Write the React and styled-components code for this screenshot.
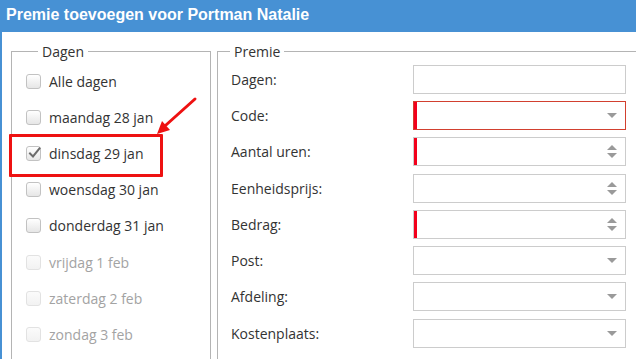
import React from "react";
import styled, { createGlobalStyle, css } from "styled-components";

const Global = createGlobalStyle`
  html, body { margin: 0; padding: 0; background: #fff; }
  * { box-sizing: border-box; }
`;

const Window = styled.div`
  position: relative;
  width: 636px;
  height: 359px;
  overflow: hidden;
  background: #fff;
  border-left: 2px solid #4791d4;
  font-family: "Open Sans", "Noto Sans", sans-serif;
  font-size: 14px;
  color: #333;
`;

const TitleBar = styled.div`
  height: 32px;
  margin-left: -2px;
  background: #4791d4;
  color: #fff;
  font-family: "Liberation Sans", Arial, sans-serif;
  font-weight: bold;
  font-size: 16px;
  line-height: 29px;
  padding-left: 6px;
  white-space: nowrap;
`;

const Body = styled.div`
  display: flex;
  gap: 6px;
  padding: 10px 0 0 9px;
`;

const Group = styled.fieldset`
  flex-shrink: 0;
  width: ${(p) => p.$width}px;
  height: 360px;
  margin: 0;
  padding: ${(p) => p.$pad};
  border: 1px solid #b4b4b4;
  min-width: 0;
`;

const Legend = styled.legend`
  margin-left: 12px;
  padding: 0 4px;
  font-size: 14px;
  line-height: 19px;
  color: #333;
`;

const DayList = styled.div`
  display: flex;
  flex-direction: column;
`;

const DayRow = styled.label`
  position: relative;
  display: flex;
  align-items: center;
  gap: 8px;
  height: 36.2px;
  color: ${(p) => (p.$disabled ? "#a3a3a3" : "#333")};
  ${(p) =>
    p.$highlight &&
    css`
      &::after {
        content: "";
        position: absolute;
        left: -17px;
        top: -1px;
        width: 148px;
        height: 37px;
        border: 3px solid #ee1111;
        border-radius: 1px;
      }
    `}
`;

const Box = styled.span`
  position: relative;
  width: 15px;
  height: 15px;
  flex-shrink: 0;
  border: 1px solid ${(p) => (p.$disabled ? "#e2e2e2" : "#c2c2c2")};
  border-radius: 3px;
  background: ${(p) =>
    p.$disabled
      ? "linear-gradient(#fbfbfb, #f2f2f2)"
      : "linear-gradient(#ffffff, #e6e6e6)"};
  svg {
    position: absolute;
    left: 0px;
    top: -1px;
  }
`;

const FormGrid = styled.div`
  display: flex;
  flex-direction: column;
  padding-left: 13px;
`;

const FormRow = styled.div`
  display: flex;
  align-items: center;
  height: 36.3px;
`;

const Label = styled.span`
  width: 182px;
  color: #333;
`;

const Input = styled.div`
  position: relative;
  width: 213px;
  height: 29px;
  border: 1px solid ${(p) => (p.$error ? "#d2402f" : "#cccccc")};
  background: #fff;
  ${(p) =>
    p.$required &&
    css`
      &::before {
        content: "";
        position: absolute;
        left: 0;
        top: 0;
        bottom: 0;
        width: 3px;
        background: #f3001c;
      }
    `}
`;

const Ctl = styled.div`
  position: absolute;
  right: 8px;
  top: 0;
  bottom: 0;
  display: flex;
  flex-direction: column;
  justify-content: center;
  gap: 3px;
`;

const Overlay = styled.svg`
  position: absolute;
  left: -2px;
  top: 0;
  pointer-events: none;
`;

const Down = () => (
  <svg width="10" height="5" viewBox="0 0 10 5">
    <path d="M0 0 H10 L5 5 Z" fill="#9a9a9a" />
  </svg>
);
const Up = () => (
  <svg width="10" height="5" viewBox="0 0 10 5">
    <path d="M0 5 H10 L5 0 Z" fill="#9a9a9a" />
  </svg>
);

const Check = () => (
  <svg width="15" height="15" viewBox="0 0 15 15">
    <path
      d="M3 7.5 L6 10.5 L12.5 2.5"
      fill="none"
      stroke="#6b6b6b"
      strokeWidth="2"
      strokeLinecap="square"
    />
  </svg>
);

const days = [
  { label: "Alle dagen" },
  { label: "maandag 28 jan" },
  { label: "dinsdag 29 jan", checked: true, highlight: true },
  { label: "woensdag 30 jan" },
  { label: "donderdag 31 jan" },
  { label: "vrijdag 1 feb", disabled: true },
  { label: "zaterdag 2 feb", disabled: true },
  { label: "zondag 3 feb", disabled: true },
];

const fields = [
  { label: "Dagen:", kind: "text" },
  { label: "Code:", kind: "select", required: true, error: true },
  { label: "Aantal uren:", kind: "spin", required: true },
  { label: "Eenheidsprijs:", kind: "spin" },
  { label: "Bedrag:", kind: "spin", required: true },
  { label: "Post:", kind: "select" },
  { label: "Afdeling:", kind: "select" },
  { label: "Kostenplaats:", kind: "select" },
];

export default function App() {
  return (
    <>
      <Global />
      <Window>
        <TitleBar>Premie toevoegen voor Portman Natalie</TitleBar>
        <Body>
          <Group $width={200} $pad="2px 0 0 14px">
            <Legend>Dagen</Legend>
            <DayList>
              {days.map((d) => (
                <DayRow key={d.label} $disabled={d.disabled} $highlight={d.highlight}>
                  <Box $disabled={d.disabled}>{d.checked && <Check />}</Box>
                  {d.label}
                </DayRow>
              ))}
            </DayList>
          </Group>
          <Group $width={440} $pad="0 0 0 0">
            <Legend>Premie</Legend>
            <FormGrid>
              {fields.map((f) => (
                <FormRow key={f.label}>
                  <Label>{f.label}</Label>
                  <Input $required={f.required} $error={f.error}>
                    {f.kind === "select" && (
                      <Ctl>
                        <Down />
                      </Ctl>
                    )}
                    {f.kind === "spin" && (
                      <Ctl>
                        <Up />
                        <Down />
                      </Ctl>
                    )}
                  </Input>
                </FormRow>
              ))}
            </FormGrid>
          </Group>
        </Body>
        <Overlay width="636" height="359" viewBox="0 0 636 359">
          <line x1="195" y1="99" x2="166" y2="125" stroke="#ee1111" strokeWidth="3" strokeLinecap="round" />
          <polygon points="157,134 170,130 162,121" fill="#ee1111" />
        </Overlay>
      </Window>
    </>
  );
}
